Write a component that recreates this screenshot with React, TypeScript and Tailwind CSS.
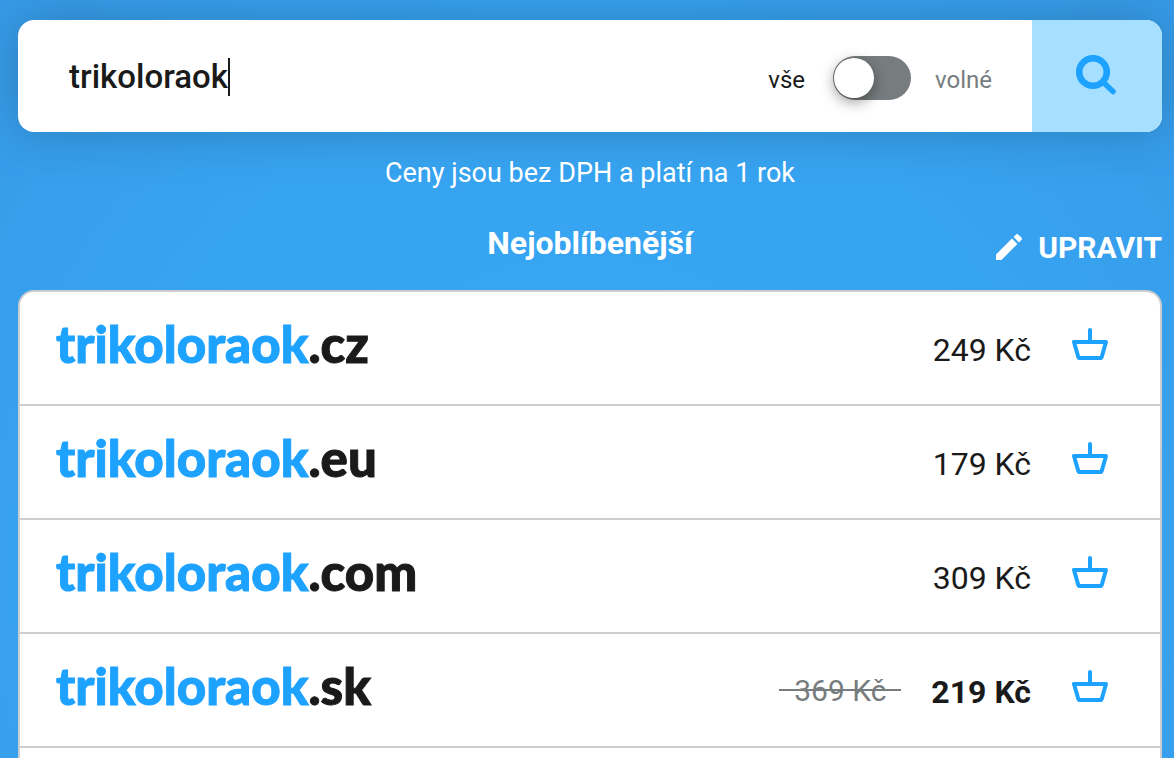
const QUERY = "trikoloraok";

type Domain = {
  tld: string;
  price: string;
  oldPrice?: string;
};

const domains: Domain[] = [
  { tld: ".cz", price: "249 Kč" },
  { tld: ".eu", price: "179 Kč" },
  { tld: ".com", price: "309 Kč" },
  { tld: ".sk", price: "219 Kč", oldPrice: "369 Kč" },
];

function SearchIcon() {
  return (
    <svg viewBox="0 0 40 40" className="h-10 w-10" fill="none" stroke="currentColor" aria-hidden="true">
      <circle cx="17" cy="17" r="13.800" strokeWidth="6.500" />
      <path d="M27 27 37 36.500" strokeWidth="5.500" strokeLinecap="round" />
    </svg>
  );
}

function PencilIcon() {
  return (
    <svg viewBox="3 3 18 18" className="h-[26px] w-[26px]" fill="currentColor" aria-hidden="true">
      <path d="M3 17.25V21h3.75L17.81 9.94l-3.75-3.75L3 17.25zM20.71 7.04a1 1 0 0 0 0-1.41l-2.34-2.34a1 1 0 0 0-1.41 0l-1.83 1.83 3.75 3.75 1.83-1.83z" />
    </svg>
  );
}

function BasketIcon() {
  return (
    <svg
      viewBox="0 0 36 34"
      className="h-[34px] w-9"
      fill="none"
      stroke="currentColor"
      strokeWidth="4"
      strokeLinecap="round"
      strokeLinejoin="round"
      aria-hidden="true"
    >
      <path d="M18 3v11" />
      <path d="M2 15h32l-4 14q-.4 2-2 2H8q-1.600 0-2-2z" />
    </svg>
  );
}

function SearchBar() {
  return (
    <form
      className="flex h-28 overflow-hidden rounded-2xl bg-white shadow-[0_0_50px_rgba(30,80,110,0.4)]"
      onSubmit={(e) => e.preventDefault()}
    >
      <div className="flex flex-1 items-center pt-0.5 pl-[51px]">
        <input
          type="text"
          aria-label="Název domény"
          defaultValue={QUERY}
          className="field-sizing-content text-[33px] font-medium text-[#1a1a1a] caret-transparent outline-none"
        />
        <span className="h-[38px] w-0.5 bg-[#1a1a1a]" />
      </div>
      <label className="flex items-center pt-1 pr-10 text-[24px]">
        <span className="pt-1 text-[#1a1a1a]">vše</span>
        <input type="checkbox" role="switch" className="peer sr-only" />
        <span className="mr-6 ml-7 flex h-11 w-[78px] items-center rounded-full bg-[#777c7e] px-px peer-checked:justify-end">
          <span className="h-10 w-10 rounded-full bg-white shadow-[0_4px_14px_rgba(0,0,0,0.4)]" />
        </span>
        <span className="pt-1 text-[#777c7e]">volné</span>
      </label>
      <button
        type="submit"
        aria-label="Hledat"
        className="flex w-[130px] items-center justify-center bg-[#a6dfff] pr-0.5 pb-0.5 text-[#1ea2ff]"
      >
        <SearchIcon />
      </button>
    </form>
  );
}

function DomainRow({ tld, price, oldPrice }: Domain) {
  return (
    <li className="flex h-[114px] items-center border-b-2 border-[#cdcdcd] pr-[52px] pb-2 pl-9">
      <span className="flex-1 font-['Lato',sans-serif] text-[51px] font-black text-[#1a1a1a] [-webkit-text-stroke:1px]">
        <span className="text-[#1ea2ff]">{QUERY}</span>
        {tld}
      </span>
      {oldPrice && (
        <s className="mt-2 mr-[30px] bg-[linear-gradient(#777c7e,#777c7e)] bg-[length:100%_2px] bg-center bg-no-repeat px-[15px] text-[30px] text-[#777c7e] no-underline">
          {oldPrice}
        </s>
      )}
      <span className={oldPrice ? "mt-3 text-[32px] font-bold text-[#1a1a1a]" : "mt-3 text-[32px] text-[#1a1a1a]"}>
        {price}
      </span>
      <button type="button" aria-label={`Do košíku ${QUERY}${tld}`} className="ml-[41px] text-[#1ea2ff]">
        <BasketIcon />
      </button>
    </li>
  );
}

export default function App() {
  return (
    <main className="flex h-screen flex-col overflow-hidden bg-[radial-gradient(circle_at_50%_75%,#38a6f4_0%,#37a4f1_60%,#379ae8_100%)] pt-5 pr-3 pl-[18px] font-['Roboto',sans-serif]">
      <SearchBar />
      <p className="mt-5 text-center text-[27px] leading-[42px] text-white">Ceny jsou bez DPH a platí na 1 rok</p>
      <div className="mt-[22px] mb-5 grid grid-cols-3 items-center text-white">
        <h2 className="col-start-2 text-center text-[32px] leading-[54px] font-bold">Nejoblíbenější</h2>
        <button type="button" className="mt-2 flex items-center gap-4 justify-self-end text-[30px] font-bold">
          <PencilIcon />
          UPRAVIT
        </button>
      </div>
      <ul className="flex-1 rounded-t-2xl border-2 border-b-0 border-[#cdcdcd] bg-white">
        {domains.map((domain) => (
          <DomainRow key={domain.tld} {...domain} />
        ))}
      </ul>
    </main>
  );
}
